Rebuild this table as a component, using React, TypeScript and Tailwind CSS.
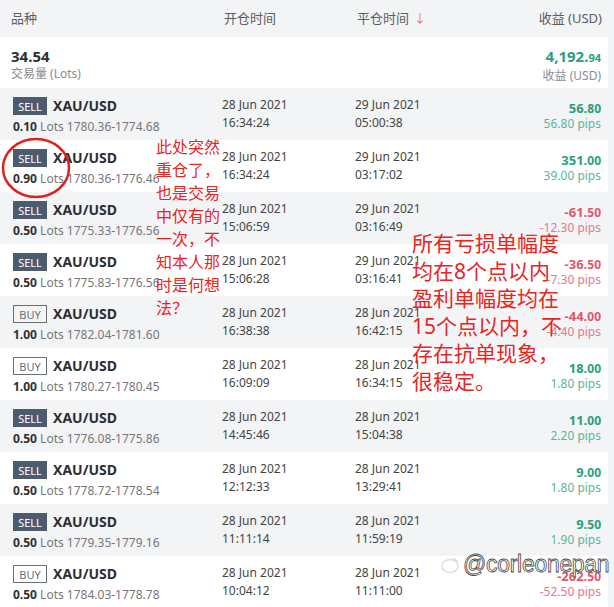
const FONT = { fontFamily: '"Noto Sans", "Noto Sans CJK SC", sans-serif' };

type Trade = {
  side: 'SELL' | 'BUY';
  lots: string;
  range: string;
  open: [string, string];
  close: [string, string];
  profit: string;
  pips: string;
};

const TRADES: Trade[] = [
  { side: 'SELL', lots: '0.10', range: '1780.36-1774.68', open: ['28 Jun 2021', '16:34:24'], close: ['29 Jun 2021', '05:00:38'], profit: '56.80', pips: '56.80' },
  { side: 'SELL', lots: '0.90', range: '1780.36-1776.46', open: ['28 Jun 2021', '16:34:24'], close: ['29 Jun 2021', '03:17:02'], profit: '351.00', pips: '39.00' },
  { side: 'SELL', lots: '0.50', range: '1775.33-1776.56', open: ['28 Jun 2021', '15:06:59'], close: ['29 Jun 2021', '03:16:49'], profit: '-61.50', pips: '-12.30' },
  { side: 'SELL', lots: '0.50', range: '1775.83-1776.56', open: ['28 Jun 2021', '15:06:28'], close: ['29 Jun 2021', '03:16:41'], profit: '-36.50', pips: '-7.30' },
  { side: 'BUY', lots: '1.00', range: '1782.04-1781.60', open: ['28 Jun 2021', '16:38:38'], close: ['28 Jun 2021', '16:42:15'], profit: '-44.00', pips: '-4.40' },
  { side: 'BUY', lots: '1.00', range: '1780.27-1780.45', open: ['28 Jun 2021', '16:09:09'], close: ['28 Jun 2021', '16:34:15'], profit: '18.00', pips: '1.80' },
  { side: 'SELL', lots: '0.50', range: '1776.08-1775.86', open: ['28 Jun 2021', '14:45:46'], close: ['28 Jun 2021', '15:04:38'], profit: '11.00', pips: '2.20' },
  { side: 'SELL', lots: '0.50', range: '1778.72-1778.54', open: ['28 Jun 2021', '12:12:33'], close: ['28 Jun 2021', '13:29:41'], profit: '9.00', pips: '1.80' },
  { side: 'SELL', lots: '0.50', range: '1779.35-1779.16', open: ['28 Jun 2021', '11:11:14'], close: ['28 Jun 2021', '11:59:19'], profit: '9.50', pips: '1.90' },
  { side: 'BUY', lots: '0.50', range: '1784.03-1778.78', open: ['28 Jun 2021', '10:04:12'], close: ['28 Jun 2021', '11:11:00'], profit: '-262.50', pips: '-52.50' },
];

const NOTE_LEFT = ['此处突然', '重仓了，', '也是交易', '中仅有的', '一次，不', '知本人那', '时是何想', '法？'];
const NOTE_RIGHT = ['所有亏损单幅度', '均在8个点以内', '盈利单幅度均在', '15个点以内，不', '存在抗单现象，', '很稳定。'];

function Badge({ side }: { side: 'SELL' | 'BUY' }) {
  if (side === 'SELL') {
    return (
      <span className="inline-flex items-center justify-center w-[34px] h-[18px] bg-[#4d5b6f] text-white text-[11px] leading-none">
        SELL
      </span>
    );
  }
  return (
    <span className="inline-flex items-center justify-center w-[34px] h-[18px] border border-[#6b6f75] text-[#6b6f75] text-[11px] leading-none">
      BUY
    </span>
  );
}

function Row({ t, shaded }: { t: Trade; shaded: boolean }) {
  const neg = t.profit.startsWith('-');
  const [whole, dec] = t.profit.split('.');
  return (
    <div className={`grid grid-cols-[209px_133px_1fr_auto] h-[52px] pl-[13px] pr-[7px] ${shaded ? 'bg-[#f3f4f6]' : 'bg-white'}`}>
      <div className="flex flex-col pt-[9px]">
        <div className="flex items-center gap-[6px] h-[18px]">
          <Badge side={t.side} />
          <span className="text-[14px] font-bold text-[#2d2f33] leading-none">XAU/USD</span>
        </div>
        <div className="mt-[3px] text-[12px] leading-[18px] text-[#777]">
          <span className="font-bold text-[#2d2f33]">{t.lots}</span> Lots {t.range}
        </div>
      </div>
      <div className="flex flex-col pt-[8px] text-[12px] leading-[18px] text-[#444]">
        <span>{t.open[0]}</span>
        <span>{t.open[1]}</span>
      </div>
      <div className="flex flex-col pt-[8px] text-[12px] leading-[18px] text-[#444]">
        <span>{t.close[0]}</span>
        <span>{t.close[1]}</span>
      </div>
      <div className="flex flex-col items-end pt-[13px]">
        <span className={`font-bold text-[13px] leading-[15px] ${neg ? 'text-[#e0566b]' : 'text-[#2a9f7f]'}`}>
          {whole}.<span className="text-[12px]">{dec}</span>
        </span>
        <span className={`text-[12px] leading-[15px] ${neg ? 'text-[#e47a8b]' : 'text-[#5db49b]'}`}>{t.pips} pips</span>
      </div>
    </div>
  );
}

export default function App() {
  return (
    <div className="relative w-[614px] h-[607px] overflow-hidden bg-[#f3f4f6]" style={FONT}>
      {/* Header */}
      <div className="grid grid-cols-[213px_133px_1fr_auto] h-[37px] items-center pl-[11px] pr-[12px] text-[13px] text-[#5a5d62]">
        <span>品种</span>
        <span>开仓时间</span>
        <span className="flex items-center gap-[5px]">
          平仓时间
          <span className="text-[#e8704f] text-[12px]">↓</span>
        </span>
        <span>收益 (USD)</span>
      </div>

      <div className="w-[608px]">
        {/* Summary */}
        <div className="flex justify-between h-[51px] bg-white pl-[11px] pr-[7px] pt-[10px]">
          <div className="flex flex-col">
            <span className="text-[15px] font-bold text-[#2d2f33] leading-[18px]">34.54</span>
            <span className="text-[12px] text-[#8a8d92] leading-[18px]">交易量 (Lots)</span>
          </div>
          <div className="flex flex-col items-end">
            <span className="text-[15px] font-bold text-[#2a9f7f] leading-[18px]">
              4,192.<span className="text-[11px]">94</span>
            </span>
            <span className="text-[12px] text-[#8a8d92] leading-[18px]">收益 (USD)</span>
          </div>
        </div>

        {TRADES.map((t, i) => (
          <Row key={i} t={t} shaded={i % 2 === 0} />
        ))}
      </div>

      {/* Red circle */}
      <svg className="absolute left-0 top-[136px]" width="74" height="64" viewBox="0 0 74 64">
        <ellipse cx="36" cy="32" rx="33" ry="29" fill="none" stroke="#e0201c" strokeWidth="2.5" />
      </svg>

      {/* Annotations */}
      <div className="absolute left-[156px] top-[136px] flex flex-col text-[16px] leading-[23px] text-[#e8251f]">
        {NOTE_LEFT.map((l) => (
          <span key={l}>{l}</span>
        ))}
      </div>
      <div className="absolute left-[412px] top-[230px] flex flex-col text-[21px] leading-[27.5px] text-[#e8251f]">
        {NOTE_RIGHT.map((l) => (
          <span key={l}>{l}</span>
        ))}
      </div>

      {/* Watermark */}
      <div className="absolute left-[440px] top-[553px] flex items-center gap-[3px] whitespace-nowrap">
        <svg width="20" height="20" viewBox="0 0 22 20">
          <ellipse cx="11" cy="11" rx="9" ry="7" fill="none" stroke="#d8d8d8" strokeWidth="1.3" />
          <path d="M14 3 q4 0 5 4" fill="none" stroke="#d8d8d8" strokeWidth="1.3" />
        </svg>
        <span
          className="text-[23px] leading-none text-white [-webkit-text-stroke:0.8px_#4a4a4a] tracking-[-0.3px]"
          style={{ fontFamily: '"Liberation Sans", sans-serif' }}
        >
          @corleonepan
        </span>
      </div>
    </div>
  );
}
